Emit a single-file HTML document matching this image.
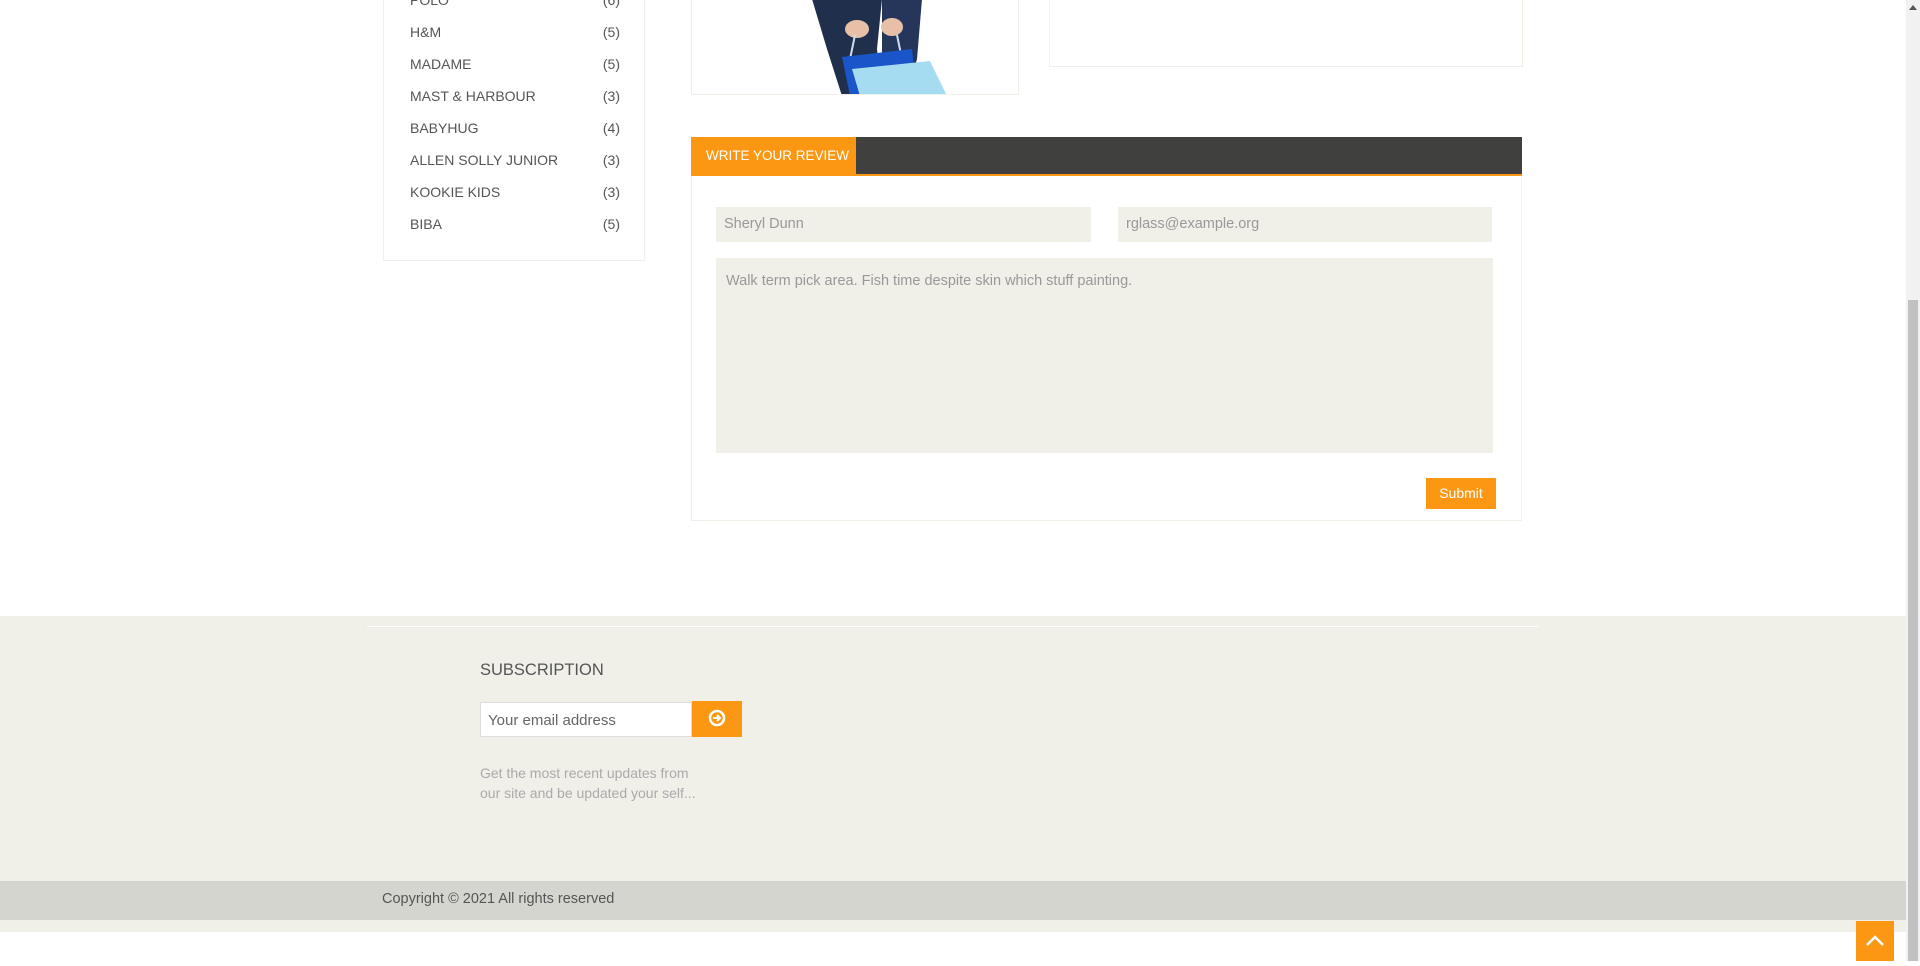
<!DOCTYPE html>
<html><head><meta charset="utf-8"><style>
*{margin:0;padding:0;box-sizing:border-box}
body{width:1920px;height:961px;position:relative;overflow:hidden;background:#fff;font-family:"Liberation Sans",sans-serif;color:#555}
.a{position:absolute;white-space:nowrap;font-family:"Liberation Sans",sans-serif}
.side{left:383px;top:-10px;width:262px;height:271px;border:1px solid #f0efe8;border-top:none}
.row{position:absolute;left:26px;width:210px;font-size:14px;color:#555}
.row span{position:absolute;right:0}
.inp{background:#f0efe8;font-size:14.5px;color:#999;padding-left:8px}
</style></head><body>
<div class="a side">
<div class="row" style="top:2px">POLO<span>(6)</span></div>
<div class="row" style="top:34px">H&amp;M<span>(5)</span></div>
<div class="row" style="top:66px">MADAME<span>(5)</span></div>
<div class="row" style="top:98px">MAST &amp; HARBOUR<span>(3)</span></div>
<div class="row" style="top:130px">BABYHUG<span>(4)</span></div>
<div class="row" style="top:162px">ALLEN SOLLY JUNIOR<span>(3)</span></div>
<div class="row" style="top:194px">KOOKIE KIDS<span>(3)</span></div>
<div class="row" style="top:226px">BIBA<span>(5)</span></div>
</div>
<div class="a" style="left:691px;top:-2px;width:328px;height:97px;border:1px solid #f0efe8;overflow:hidden">
<svg width="328" height="97" style="position:absolute;left:0;top:0">
<path d="M120 0 L190 0 L185 50 L190 97 L150 97 L135 50 Z" fill="#1f2f4c"/>
<path d="M190 0 L230 0 L225 60 L215 97 L190 97 Z" fill="#25365a"/>
<ellipse cx="165" cy="30" rx="12" ry="9" fill="#e8c0a8"/>
<ellipse cx="200" cy="28" rx="11" ry="9" fill="#e8c0a8"/>
<path d="M163 36 L158 60 M205 36 L210 60" stroke="#cde" stroke-width="2" fill="none"/>
<path d="M150 58 L220 50 L225 97 L158 97 Z" fill="#1a55c9"/>
<path d="M160 70 L238 62 L255 97 L168 97 Z" fill="#a6dcf2"/>
</svg></div>
<div class="a" style="left:1049px;top:-2px;width:474px;height:69px;border:1px solid #f0efe8"></div>

<div class="a" style="left:691px;top:137px;width:831px;height:384px;border:1px solid #f0efe8"></div>
<div class="a" style="left:691px;top:137px;width:831px;height:39px;background:#40403e;border-bottom:2px solid #fb9712"></div>
<div class="a" style="left:691px;top:137px;width:165px;height:37px;background:#fb9712;color:#fff;font-size:13.5px;line-height:38px;padding-left:15px">WRITE YOUR REVIEW</div>
<div class="a inp" style="left:716px;top:207px;width:375px;height:35px;line-height:35px">Sheryl Dunn</div>
<div class="a inp" style="left:1118px;top:207px;width:374px;height:35px;line-height:35px">rglass@example.org</div>
<div class="a inp" style="left:716px;top:258px;width:777px;height:195px;padding:15px 10px">Walk term pick area. Fish time despite skin which stuff painting.</div>
<div class="a" style="left:1426px;top:478px;width:70px;height:31px;background:#fb9712;color:#fff;font-size:14px;line-height:31px;text-align:center">Submit</div>

<div class="a" style="left:0;top:616px;width:1906px;height:316px;background:#f0efe8"></div>
<div class="a" style="left:367px;top:626px;width:1171px;height:1px;background:#fff"></div>
<div class="a" style="left:480px;top:661px;font-size:16.5px;color:#555">SUBSCRIPTION</div>
<div class="a" style="left:480px;top:702px;width:212px;height:35px;background:#fff;border:1px solid #ddd;font-size:15px;color:#666;line-height:35px;padding-left:7px">Your email address</div>
<div class="a" style="left:692px;top:701px;width:50px;height:36px;background:#fb9712">
<svg width="50" height="36"><circle cx="25" cy="17" r="7" fill="none" stroke="#fff" stroke-width="2.5"/><path d="M21 17h7M25 14l3 3-3 3" stroke="#fff" stroke-width="2" fill="none"/></svg></div>
<div class="a" style="left:480px;top:763px;font-size:14px;line-height:20px;color:#aaa">Get the most recent updates from<br>our site and be updated your self...</div>
<div class="a" style="left:0;top:881px;width:1906px;height:39px;background:#d5d5cf"></div>
<div class="a" style="left:382px;top:891px;font-size:14.5px;color:#555">Copyright © 2021 All rights reserved</div>

<div class="a" style="left:1906px;top:0;width:14px;height:961px;background:#f1f1f1"></div>
<div class="a" style="left:1908px;top:300px;width:10px;height:661px;background:#c1c1c1"></div>
<div class="a" style="left:1909px;top:5px;width:0;height:0;border-left:4px solid transparent;border-right:4px solid transparent;border-bottom:5px solid #555"></div>
<div class="a" style="left:1856px;top:921px;width:38px;height:40px;background:#fb9712">
<svg width="38" height="40"><path d="M11 24l8-8 8 8" stroke="#fff" stroke-width="2.5" fill="none"/></svg></div>
</body></html>
